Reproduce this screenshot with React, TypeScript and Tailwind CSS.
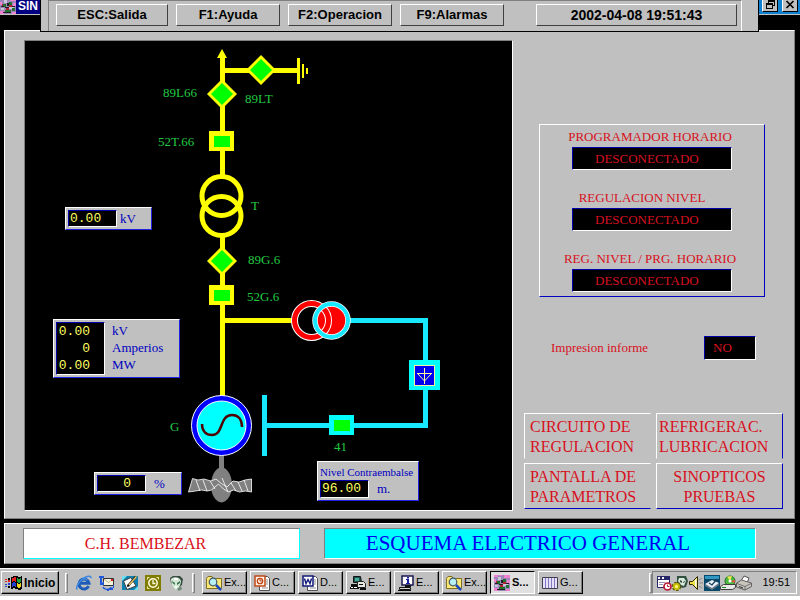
import type { ReactNode } from 'react';
import clsx from 'clsx';

const serif = "font-['Liberation_Serif',serif]";
const sans = "font-['Liberation_Sans',sans-serif]";
const mono = "font-['Liberation_Mono',monospace]";

const raised = 'border border-t-white border-l-white border-r-[#404040] border-b-[#404040]';
const sunken = 'border border-t-[#0000a8] border-l-[#0000a8] border-r-white border-b-white';

const functionKeys = [
  { label: 'ESC:Salida', width: 'w-28' },
  { label: 'F1:Ayuda', width: 'w-[104px]' },
  { label: 'F2:Operacion', width: 'w-[104px]' },
  { label: 'F9:Alarmas', width: 'w-[104px]' },
];

const controls = [
  { name: 'PROGRAMADOR HORARIO', className: 'pr-1' },
  { name: 'REGULACION NIVEL', className: 'pr-5' },
  { name: 'REG. NIVEL / PRG. HORARIO', className: 'pr-1' },
];

const screens = [
  { lines: ['CIRCUITO DE', 'REGULACION'], className: 'border-r-transparent border-b-transparent text-left pl-[5px]' },
  { lines: ['REFRIGERAC.', 'LUBRICACION'], className: 'border-r-[#0000c0] border-b-transparent text-left pl-0.5' },
  { lines: ['PANTALLA DE', 'PARAMETROS'], className: 'border-r-transparent border-b-[#0000c0] text-left pl-[5px]' },
  { lines: ['SINOPTICOS', 'PRUEBAS'], className: 'border-r-[#0000c0] border-b-[#0000c0] text-center' },
];

/* ── Icons ── */

function Icon({ children, size = 'w-4 h-4' }: { children: ReactNode; size?: string }) {
  return (
    <svg viewBox="0 0 16 16" className={clsx('shrink-0', size)} aria-hidden="true">
      {children}
    </svg>
  );
}

function ScadaIcon() {
  return (
    <Icon>
      <g shapeRendering="crispEdges">
        <path fill="#9a86b8" d="M0 0h16v16H0z" />
        <path fill="#f080d0" d="M0 0h4v2H0zM5 0h3v1H5zM10 0h6v3h-6zM0 4h2v3H0zM13 5h3v3h-3zM0 13h4v3H0zM12 14h4v2h-4z" />
        <path fill="#c8c8d8" d="M4 2h3v3H4zM9 9h5v2H9zM1 10h3v2H1z" />
        <path fill="#207030" d="M3 6h3v3H3zM9 4h3v3H9zM5 12h6v2H5zM12 10h3v3h-3z" />
        <path fill="#202020" d="M1 8h3v1H1zM5 9h4v1H5zM7 5h2v3H7zM11 8h4v1h-4zM3 14h8v1H3z" />
        <path fill="#b02030" d="M2 6h1v2H2zM9 7h3v2H9zM6 10h3v2H6z" />
      </g>
    </Icon>
  );
}

function WindowsFlag() {
  return (
    <svg viewBox="0 0 17 16" className="h-4 w-[17px] shrink-0" aria-hidden="true">
      <g shapeRendering="crispEdges">
        <path fill="#000" d="M6 2 9 1h3l2 1 3-1v13l-3 1-3-1-2-1-3 1z" />
        <path fill="#e02020" d="M7 3l3-1 1 1v4L9 6 7 7z" />
        <path fill="#20a040" d="M12 3l2 1 2-1v4l-2 1-2-1z" />
        <path fill="#2040d0" d="M7 8l2-1 2 1v4l-2-1-2 1z" />
        <path fill="#f0d020" d="M12 8l2 1 2-1v4l-2 1-2-1z" />
        <path fill="#000" d="M3 3h2v2H3zM3 11h2v2H3z" />
        <path fill="#e02020" d="M3 5h2v2H3zM0 4h2v1H0zM0 6h2v1H0z" />
        <path fill="#2040d0" d="M3 8h2v2H3zM0 9h2v1H0zM0 11h2v1H0z" />
      </g>
    </svg>
  );
}

function ExplorerIcon() {
  return (
    <Icon>
      <path fill="none" stroke="#1c5cb8" strokeWidth="3" d="M12.600 11.200A5 5 0 1 1 13 8.300H4.600" />
      <path fill="none" stroke="#5aa8f0" strokeWidth="1" d="M4 6.500A5 5 0 0 1 11.500 5" />
      <path fill="none" stroke="#3c88e0" strokeWidth="1.500" d="M1.200 14.500C-.8 12 4 5 9 2.500c3-1.600 6-2 6 .8" />
    </Icon>
  );
}

function OutlookExpressIcon() {
  return (
    <Icon>
      <path fill="#f8f4e0" stroke="#303030" d="M4.500 3.500h10v7h-10z" />
      <path fill="none" stroke="#a09060" strokeWidth=".7" d="M5 4l4.500 3.500L14 4" />
      <path fill="#d02020" d="M12 4h2v2h-2z" />
      <path fill="#2058d8" d="M0 1h5v2H3v3H1V3H0zM1 6h2v2l2-2v4H1zM8 14h3v-2l4 1v-3h-1v5h-4v1H8z" />
      <path fill="none" stroke="#2058d8" strokeWidth="1.500" d="M4 12c1 3 6 3 7 1" />
    </Icon>
  );
}

function DesktopIcon() {
  return (
    <Icon>
      <path fill="#0c80b0" d="M0 1h16v14H0z" />
      <path fill="#70e0f0" d="M0 1h5L0 6zM16 15h-4l4-4z" />
      <path fill="#fff" stroke="#404040" d="M1.500 6 9 2.500l5 8.500-9 3.500z" />
      <path stroke="#202020" strokeWidth="2.500" d="M6 11 14 1.500" />
      <path stroke="#f0c860" strokeWidth="1.300" d="M7 10 14.500 1.500" />
      <path fill="#000" d="m5 12 .5-2.500L7.500 11z" />
    </Icon>
  );
}

function OutlookIcon() {
  return (
    <Icon>
      <path fill="#807c00" d="M0 0h16v16H0z" />
      <path fill="none" stroke="#f4f0b0" d="M4.500 2.500h-2v2M11.500 2.500h2v2M4.500 13.500h-2v-2M11.500 13.500h2v-2" />
      <circle cx="8" cy="8" r="4.200" fill="none" stroke="#fffce0" strokeWidth="1.500" />
      <path fill="none" stroke="#fffce0" strokeWidth="1.300" d="M8 5v3.500h2.500" />
    </Icon>
  );
}

function AlienIcon() {
  return (
    <Icon>
      <path fill="#384c40" d="M2 3 5 1h7l3 3-1 6-3 2-8-4z" />
      <path fill="#d0e8d4" d="M3 4c3-3 9-2 10 2 0 3-2 7-5 9-2-1-5-6-5-11z" />
      <path fill="#387050" d="m4 6 3 2v2L4.500 8zM12 6 9 8v2l3-2z" />
      <path fill="#fff" d="M6 3h4v2H6zM7 11h2v2H7z" />
      <path fill="#708878" d="m9 14 4-3 1 3-3 2z" />
    </Icon>
  );
}

function FolderSearchIcon() {
  return (
    <Icon>
      <path fill="#fce878" stroke="#807020" d="M.5 3.500 2 1.500h4l1 2h8.500v10H.5z" />
      <circle cx="7" cy="7" r="3.800" fill="#b8f0f8" stroke="#405868" strokeWidth="1.200" />
      <path stroke="#1848c0" strokeWidth="2.500" d="m10 10 5 5" />
    </Icon>
  );
}

function PowerPointIcon() {
  return (
    <Icon>
      <path fill="#fff" stroke="#505050" d="M5.500 1.500h8l2 2v12h-10z" />
      <path stroke="#909090" d="M12 5h2M12 7h2M12 9h2M8 13h6" />
      <path fill="#fff4ec" stroke="#c04818" strokeWidth="1.500" d="M1 1h10v10H1z" />
      <circle cx="6" cy="6" r="2.700" fill="none" stroke="#c04818" strokeWidth="1.300" />
      <path fill="none" stroke="#c04818" d="M6 3v3h3" />
    </Icon>
  );
}

function WordIcon() {
  return (
    <Icon>
      <path fill="#fff" stroke="#505050" d="M5.500 1.500h8l2 2v12h-10z" />
      <path stroke="#909090" d="M12 5h2M12 7h2M12 9h2M8 13h6" />
      <path fill="#fff" stroke="#101878" strokeWidth="1.500" d="M1 1h10v10H1z" />
      <path fill="none" stroke="#101878" strokeWidth="1.400" d="m2.500 3.500 1.500 5 2-4 2 4 1.500-5" />
    </Icon>
  );
}

function TerminalIcon() {
  return (
    <Icon>
      <path fill="#185850" stroke="#101010" d="M3.500 1.500h7l1 6h-8z" />
      <path fill="#48a898" d="M5 3h4v3H5z" />
      <path fill="#e8e8e0" stroke="#202020" d="M7.500 6.500h6l2 2v4h-8z" />
      <path fill="#101010" d="M1 9h6v3H1zM0 12h9v2H0zM9 9h4v1H9zM10 13h6v2h-6z" />
      <path fill="#fff" d="M1 12h2v1H1zM4 12h3v1H4z" />
    </Icon>
  );
}

function MonitorInfoIcon() {
  return (
    <Icon>
      <path fill="#fff" stroke="#181850" strokeWidth="1.500" d="M4 1h11v9H4z" />
      <path fill="#1820a0" d="M9 2h2v1.500H9zM8 4h3v4h1v1H8V8h1V5H8z" />
      <path fill="#d8d8d0" stroke="#101010" d="M1.500 12.500h11v2h-11z" />
      <path fill="#101010" d="M7 10h6v2H7zM0 15h13v1H0z" />
    </Icon>
  );
}

function GridIcon() {
  return (
    <Icon>
      <path fill="#e8e0f8" stroke="#404050" d="M.5 2.500h15v11H.5z" />
      <path stroke="#8078c0" d="M3.500 3v10M6.500 3v10M9.500 3v10M12.500 3v10" />
    </Icon>
  );
}

function SchedulerIcon() {
  return (
    <Icon>
      <path fill="#fff" stroke="#282868" d="M1.500 1.500h12v11h-12z" />
      <path fill="#282868" d="M1 1h13v4H1z" />
      <path fill="#fff" d="M2 2h2v2H2zM6 2h2v2H6z" />
      <path stroke="#9090b8" d="M3 7.500h6M3 9.500h4" />
      <circle cx="11.500" cy="11.500" r="3.500" fill="#fff" stroke="#b81830" strokeWidth="1.700" />
      <path fill="none" stroke="#b81830" d="M11.500 9.500v2h2" />
    </Icon>
  );
}

function AgentIcon() {
  return (
    <Icon>
      <path fill="#305040" d="M5 1h9l2 5-2 6-4 1-5-5z" />
      <path fill="#d8e8dc" d="M7 3h5l2 3-2 5-3-1-3-4z" />
      <path fill="#305040" d="m8 5 2 1v2L8 7zM13 6l-2 1v1l2-1z" />
      <circle cx="4.500" cy="11.500" r="3" fill="none" stroke="#605800" strokeWidth="3.500" strokeDasharray="2 1" />
      <circle cx="4.500" cy="11.500" r="2.500" fill="#fff880" stroke="#c8c000" strokeWidth="1.800" />
    </Icon>
  );
}

function SpeakerIcon() {
  return (
    <Icon>
      <path fill="#f0e040" stroke="#302800" d="M1.500 6.500h3l5-5v13l-5-5h-3z" />
      <path fill="#fff" d="M7 5l1.500-1.500v9L7 11z" />
      <path stroke="#888" d="m11 5 3-2M11.500 8H15M11 11l3 2" />
    </Icon>
  );
}

function TabletIcon() {
  return (
    <Icon>
      <path fill="#084868" d="M0 0h16v16H0z" />
      <path fill="#3098c0" d="M1 1h14v3H1z" />
      <path fill="#e8f0f8" d="m1 9 7-4 7 3-7 6z" />
      <path fill="#687888" d="m1 9 7 4 7-5v2l-7 5-7-4z" />
      <path fill="none" stroke="#184058" strokeWidth="1.300" d="m5 8 3 2 5-6" />
    </Icon>
  );
}

function DiskIcon() {
  return (
    <Icon>
      <circle cx="10" cy="6" r="5" fill="#50b840" stroke="#207020" />
      <path fill="#f0e850" d="M10 6 7 1.500 12 1z" />
      <path fill="#e05040" d="m10 6 5-1v3z" />
      <circle cx="10" cy="6" r="1.500" fill="#fff" />
      <path fill="#e8e8e8" stroke="#404040" d="m.5 11.500 3-2h12v3l-3 2H.5z" />
      <path fill="#208020" d="M2 12h4v1H2z" />
    </Icon>
  );
}

function PrinterIcon() {
  return (
    <Icon>
      <path fill="#fff" stroke="#505050" d="m5 6 3-5 5 2-2 5z" />
      <path fill="#c8c4bc" stroke="#606060" d="m.5 8 5-3L15.500 8v3.500L9 15 .5 12z" />
      <path fill="none" stroke="#707070" d="m1 8.500 8 3 6-3M9 11.500V15" />
      <path fill="#303030" d="m3 11 4 1.500v1L3 12z" />
    </Icon>
  );
}

const quickLaunch = [
  { name: 'Internet Explorer', icon: <ExplorerIcon /> },
  { name: 'Outlook Express', icon: <OutlookExpressIcon /> },
  { name: 'Escritorio', icon: <DesktopIcon /> },
  { name: 'Outlook', icon: <OutlookIcon /> },
  { name: 'Agente', icon: <AlienIcon /> },
];

const tasks = [
  { label: 'Ex...', icon: <FolderSearchIcon /> },
  { label: 'C...', icon: <PowerPointIcon /> },
  { label: 'D...', icon: <WordIcon /> },
  { label: 'E...', icon: <TerminalIcon /> },
  { label: 'E...', icon: <MonitorInfoIcon /> },
  { label: 'Ex...', icon: <FolderSearchIcon /> },
  { label: 'S...', icon: <ScadaIcon />, active: true },
  { label: 'G...', icon: <GridIcon /> },
];

/* ── Diagram ── */

function Isolator({ x, y }: { x: number; y: number }) {
  return (
    <g transform={`translate(${x} ${y})`}>
      <path fill="#ffff00" d="M0-15 15 0 0 15-15 0z" />
      <path fill="#00ff00" d="M0-11 11 0 0 11-11 0z" />
    </g>
  );
}

function Breaker({ x, y, color }: { x: number; y: number; color: string }) {
  return (
    <g transform={`translate(${x} ${y})`} shapeRendering="crispEdges">
      <path fill={color} d="M-13-10h25v20h-25z" />
      <path fill="#00ff00" d="M-8-5H8V6H-8z" />
    </g>
  );
}

// Drawn in screen units, the viewBox starts at the corner of the black area
function Schematic() {
  return (
    <svg viewBox="25 41 487 469" className="block h-[469px] w-[487px]" role="img" aria-label="Esquema unifilar">
      <g shapeRendering="crispEdges" fill="none" strokeWidth="5">
        <path stroke="#ffff00" d="M222 56v120M222 237v160M222 70.500h76M222 320.500h70" />
        <path stroke="#18e8ff" d="M350 320.500h75v105H266" />
        <path stroke="#18e8ff" d="M264.500 395v61" />
        <path stroke="#ffff00" strokeWidth="3" d="M298.500 58v26" />
        <path stroke="#ffff00" strokeWidth="2" d="M303 64v14M307 68v6" />
      </g>
      <path fill="#ffff00" d="m222 49 5 9h-10z" />

      <Isolator x={261} y={70} />
      <Isolator x={222} y={94} />
      <Isolator x={222} y={261} />
      <Breaker x={222} y={141} color="#ffff00" />
      <Breaker x={222} y={295} color="#ffff00" />
      <Breaker x={342} y={425} color="#00ffff" />

      <g fill="none" stroke="#ffff00" strokeWidth="5">
        <circle cx="221.500" cy="196" r="19.500" />
        <circle cx="221.500" cy="216" r="19.500" />
      </g>

      {/* excitation transformer */}
      <circle cx="331.500" cy="320.500" r="15" fill="#ff0000" />
      <circle cx="311.500" cy="320.500" r="17" fill="none" stroke="#fff" strokeWidth="7" />
      <circle cx="311.500" cy="320.500" r="17" fill="none" stroke="#ff0000" strokeWidth="5" />
      <circle cx="331.500" cy="320.500" r="16.500" fill="none" stroke="#fff" strokeWidth="5.500" />
      <circle cx="331.500" cy="320.500" r="16.500" fill="none" stroke="#18e8ff" strokeWidth="4" />

      {/* rectifier */}
      <g shapeRendering="crispEdges">
        <path fill="#00ffff" d="M409 360h31v30h-31z" />
        <path fill="#0000f0" stroke="#f0f0a0" d="M414.500 365.500h20v20h-20z" />
      </g>
      <path fill="none" stroke="#ffffa0" d="M424.500 368v16M417 373.500h15M418 374l6.500 7 6.500-7" />

      {/* generator */}
      <circle cx="221.500" cy="425.500" r="30" fill="#0000ff" stroke="#fff" />
      <circle cx="221.500" cy="425.500" r="24.500" fill="#00ffff" stroke="#fff" />
      <path
        fill="none"
        stroke="#500000"
        strokeWidth="2.500"
        d="M202 424c0 7 4 11 10 11 12 0 7-20 20-20 6 0 10 4 10 12"
      />

      {/* turbine */}
      <path fill="#808080" d="M219 456h5v14h-5z" />
      <ellipse cx="221.500" cy="485" rx="10.500" ry="17.500" fill="#808080" />
      <path
        fill="#808080"
        stroke="#fff"
        strokeWidth=".8"
        d="M192.500 478.500 198 480l6-1 7 2 5-2 6 5 5 3 6-6 6 1 6-2 6.500-1V492l-6-1-6 1-6-2-5 2-5-3-5-5-7 6-4 1-6-1-6 1-7 1z"
      />
      <path
        fill="none"
        stroke="#fff"
        strokeWidth=".8"
        d="m196 480 4 11M203 480l4 11M210 481l5 8M222 478l6 14M231 483l5 8M238 482l4 9M244 480l4 11"
      />

      <g className="fill-[#20c840] font-['Liberation_Serif',serif] text-[13px]">
        <text x="163" y="97">89L66</text>
        <text x="245" y="103">89LT</text>
        <text x="158" y="146">52T.66</text>
        <text x="251" y="210">T</text>
        <text x="248" y="264">89G.6</text>
        <text x="247" y="301">52G.6</text>
        <text x="170" y="431">G</text>
        <text x="334" y="451">41</text>
      </g>
    </svg>
  );
}

function Meter({ className, children }: { className: string; children: ReactNode }) {
  return (
    <div
      className={clsx(
        'absolute border border-t-white border-l-white border-r-[#2020e0] border-b-[#2020e0] bg-[#c0c0c0] p-0.5 text-[13px] text-[#0000c0]',
        serif,
        className,
      )}
    >
      {children}
    </div>
  );
}

function Reading({ children, className }: { children: ReactNode; className?: string }) {
  return (
    <output className={clsx('block w-[49px] shrink-0 bg-black pl-px text-[#ffff60]', sunken, mono, className)}>
      {children}
    </output>
  );
}

function Diagram() {
  return (
    <div className="flex-1 border border-t-[#808080] border-l-[#808080] border-r-white border-b-white bg-black">
      <div className="relative w-[487px]">
        <Schematic />
        <Meter className="top-[166px] left-10 flex w-[87px] items-center gap-[3px]">
          <Reading className="leading-[15px]">0.00</Reading>
          <span className="leading-4">kV</span>
        </Meter>
        <Meter className="top-[278px] left-7 flex w-[127px] gap-[7px]">
          <Reading className="leading-[17px]">
            <div className="w-8 text-right">0.00</div>
            <div className="w-8 text-right">0</div>
            <div className="w-8 text-right">0.00</div>
          </Reading>
          <div className="leading-[17px]">
            <div>kV</div>
            <div>Amperios</div>
            <div>MW</div>
          </div>
        </Meter>
        <Meter className="top-[431px] left-[69px] flex w-[88px] items-center gap-2">
          <Reading className="leading-[15px]">
            <div className="w-8 text-right">0</div>
          </Reading>
          <span className="leading-4">%</span>
        </Meter>
        <Meter className="top-[420px] left-[292px] w-[102px]">
          <div className="text-[11px] leading-4">Nivel Contraembalse</div>
          <div className="flex items-center gap-2">
            <Reading className="leading-4">96.00</Reading>
            <span className="leading-4">m.</span>
          </div>
        </Meter>
      </div>
    </div>
  );
}

/* ── Right hand controls ── */

function SidePanel() {
  return (
    <aside className={clsx('flex w-[281px] shrink-0 flex-col pt-[84px] text-[13px] text-[#d81020]', serif)}>
      <div className="mr-[29px] ml-[26px] flex flex-col gap-[18px] border border-t-white border-l-white border-r-[#0000c0] border-b-[#0000c0] pt-0.5 pb-1">
        {controls.map((control) => (
          <div key={control.name}>
            <div className={clsx('text-center leading-5', control.className)}>{control.name}</div>
            <div className={clsx('mx-auto w-40 bg-black pl-[22px] leading-[21px]', sunken)}>DESCONECTADO</div>
          </div>
        ))}
      </div>
      <div className="mt-[39px] mr-[38px] ml-[38px] flex items-center justify-between">
        <span>Impresion informe</span>
        <div className={clsx('w-[52px] bg-black pl-2 leading-[22px]', sunken)}>NO</div>
      </div>
      <nav className="mt-auto mr-[11px] ml-[11px] grid grid-cols-2 gap-x-[5px] gap-y-1 pb-0.5">
        {screens.map((screen) => (
          <button
            key={screen.lines[0]}
            type="button"
            className={clsx(
              'border border-t-white border-l-white pt-[3px] pb-px text-base leading-5',
              screen.className,
            )}
          >
            {screen.lines.map((line) => (
              <span key={line} className="block">{line}</span>
            ))}
          </button>
        ))}
      </nav>
    </aside>
  );
}

/* ── Window chrome ── */

function Header() {
  return (
    <header className={clsx('relative z-10 flex h-8', sans)}>
      <div className="w-10">
        <div className="flex h-[15px] items-end gap-0.5 overflow-hidden border-b border-[#c0c0c0] bg-[#000080]">
          <ScadaIcon />
          <span className="text-xs leading-4 font-bold text-white">SIN</span>
        </div>
      </div>
      <div className="flex flex-1 border-r border-b border-l border-black bg-[#c0c0c0] pr-4 pl-[7px]">
        <div className="flex flex-1 items-start gap-2 border-t border-r border-l border-t-[#808080] border-r-white border-l-[#808080] pt-[3px] pr-1 pl-[7px]">
          {functionKeys.map((key) => (
            <button
              key={key.label}
              type="button"
              className={clsx('text-[13px] leading-5 font-bold', key.width, raised)}
            >
              {key.label}
            </button>
          ))}
          <time className={clsx('ml-6 flex-1 text-center text-sm leading-5 font-bold', raised)}>
            2002-04-08 19:51:43
          </time>
        </div>
      </div>
      <div className="w-[41px]">
        <div className="flex h-[15px] gap-1 border-b border-[#c0c0c0] bg-[#1080d0] pl-[3px]">
          <button type="button" aria-label="Restaurar" className="h-3 w-4 border border-t-0 border-white border-r-black border-b-black bg-[#c0c0c0]">
            <svg viewBox="0 0 14 11" className="h-[11px] w-[14px]" shapeRendering="crispEdges">
              <path fill="none" stroke="#000" d="M5.500 3V.500h6v5H9M3.500 4.500h6v4h-6zM3 3.500h7M5 1.500h6" />
            </svg>
          </button>
          <button type="button" aria-label="Cerrar" className="h-3 w-4 border border-t-0 border-white border-r-black border-b-black bg-[#c0c0c0]">
            <svg viewBox="0 0 14 11" className="h-[11px] w-[14px]">
              <path stroke="#000" strokeWidth="1.700" d="m3.500 1 7 7M10.500 1l-7 7" />
            </svg>
          </button>
        </div>
      </div>
    </header>
  );
}

function Grip() {
  return <div className="h-5 w-[3px] border border-t-white border-l-white border-r-[#808080] border-b-[#808080]" />;
}

function Taskbar() {
  const face = 'border border-t-white border-l-white border-r-black border-b-black shadow-[inset_-1px_-1px_0_#808080]';
  return (
    <div className={clsx('flex h-7 items-center border-t border-white bg-[#c0c0c0] pr-[3px] pl-px text-xs', sans)}>
      <button type="button" className={clsx('flex h-[23px] w-[58px] items-center gap-0.5 pl-[3px] font-bold', face)}>
        <WindowsFlag />
        Inicio
      </button>
      <div className="ml-1.5 flex items-center">
        <Grip />
        <div className="ml-2 flex gap-[7px]">
          {quickLaunch.map((item) => (
            <button key={item.name} type="button" aria-label={item.name}>
              {item.icon}
            </button>
          ))}
        </div>
      </div>
      <div className="ml-2 flex flex-1 items-center gap-[3px]">
        <Grip />
        {tasks.map((task, i) => (
          <button
            key={i}
            type="button"
            className={clsx(
              'flex h-[23px] w-[45px] items-center gap-0.5 pl-[3px] text-[11px] whitespace-nowrap',
              i === 0 && 'ml-1',
              task.active
                ? 'border border-t-black border-l-black border-r-white border-b-white bg-[#e0e0e0] font-bold'
                : face,
            )}
          >
            {task.icon}
            {task.label}
          </button>
        ))}
      </div>
      <Grip />
      <div className="flex h-[23px] items-center border border-t-[#808080] border-l-[#808080] border-r-white border-b-white pr-1.5 pl-[3px]">
        <SchedulerIcon />
        <AgentIcon />
        <SpeakerIcon />
        <TabletIcon />
        <DiskIcon />
        <PrinterIcon />
        <span className="pl-2.5 text-[11px]">19:51</span>
      </div>
    </div>
  );
}

export default function App() {
  const panel = 'ml-1 mr-[5px] border border-t-white border-l-white border-r-[#808080] border-b-[#808080] bg-[#c0c0c0]';
  return (
    <div className="flex min-h-screen flex-col bg-white pb-1 text-black">
      <div className="flex flex-1 flex-col bg-black pb-1">
        <Header />
        <main className={clsx('-mt-0.5 flex flex-1 pt-[9px] pb-[7px] pl-[19px]', panel)}>
          <Diagram />
          <SidePanel />
        </main>
        <footer className={clsx('mt-1 grid grid-cols-[277fr_432fr] gap-6 py-1 pr-[38px] pl-[18px]', panel, serif)}>
          <div className="border border-t-[#808080] border-l-[#808080] border-r-[#00ffff] border-b-[#00ffff] bg-white pr-8 text-center text-base leading-[29px] text-[#d81020]">
            C.H. BEMBEZAR
          </div>
          <div className="border border-t-[#808080] border-l-[#808080] border-r-white border-b-white bg-[#00ffff] pr-6 text-center text-[21px] leading-[29px] text-[#0000f0]">
            ESQUEMA ELECTRICO GENERAL
          </div>
        </footer>
      </div>
      <Taskbar />
    </div>
  );
}
